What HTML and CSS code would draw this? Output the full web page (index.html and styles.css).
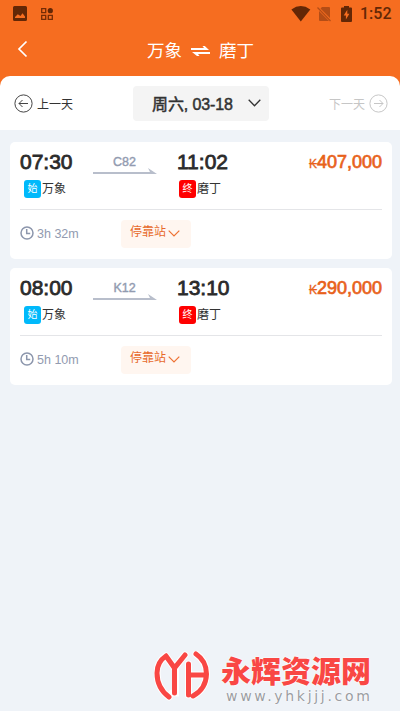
FILE: index.html
```html
<!DOCTYPE html>
<html lang="zh-CN">
<head>
<meta charset="utf-8">
<title>万象 ⇌ 磨丁</title>
<link rel="stylesheet" href="styles.css">
</head>
<body>
<header class="header">
  <div class="status">
    <svg class="s-photo" width="14" height="15" viewBox="0 0 14 15"><path fill="#632706" fill-rule="evenodd" d="M1.5 0h11Q14 0 14 1.5v12q0 1.500-1.500 1.500h-11Q0 15 0 13.500v-12Q0 0 1.500 0zM2 12h10V10.500L9.500 7.200 7.500 10 4.800 8.200 2 11z"/></svg>
    <svg class="s-apps" width="12" height="12" viewBox="0 0 12 12"><g fill="none" stroke="#742c06" stroke-width="1.300"><path d="M.7.700h4v4h-4zM.7 7.300h4v4h-4zM7.300 7.300h4v4h-4z"/></g><circle cx="9.300" cy="2.700" r="2.600" fill="#632706"/></svg>
    <svg class="s-wifi" width="20" height="16" viewBox="0 0 20 16"><path fill="#632706" d="M.4 3.500Q9.800-3.300 19.300 3.500L9.800 15.500z"/></svg>
    <svg class="s-sim" width="15" height="16" viewBox="0 0 15 16"><path fill="#b44d16" d="M5 1h7q1 0 1 1v10L3.500 2.500zM2 5l10 10H3q-1 0-1-1z"/><path d="M.5 1.500l13 13.500" stroke="#b44d16" stroke-width="1.200"/></svg>
    <svg class="s-battery" width="11" height="16" viewBox="0 0 11 16"><path fill="#632706" d="M3 0h5v1.500h2q1 0 1 1V15q0 1-1 1H1q-1 0-1-1V2.500q0-1 1-1h2z"/><path fill="#f66d20" d="M6.300 3.800L2.700 9.500h2.200v4l3.500-5.700H6.300z"/></svg>
    <span class="clock">1:52</span>
  </div>
  <div class="titlebar">
    <svg class="back" width="12" height="18" viewBox="0 0 12 18"><path d="M9.500 1.500L2 9l7.500 7.500" fill="none" stroke="#fff" stroke-width="1.700"/></svg>
    <span class="place">万象</span>
    <svg class="swap" width="19" height="10" viewBox="0 0 19 10"><path fill="#fff" d="M0 1.900h13L11.500 0h2.300L18 3.900H0zM19 8H7L8.500 10H6L1 6h18z"/></svg>
    <span class="place">磨丁</span>
  </div>
</header>
<nav class="days">
  <div class="prev">
    <svg width="19" height="19" viewBox="0 0 19 19" fill="none" stroke="#444" stroke-width="1"><circle cx="9.500" cy="9.500" r="8.600"/><path d="M14 9.500H5M8.500 6L5 9.500 8.500 13"/></svg>
    <span>上一天</span>
  </div>
  <div class="date"><span>周六, 03-18</span>
    <svg width="13" height="8" viewBox="0 0 13 8"><path d="M.7.800l5.800 5.900L12.300.8" fill="none" stroke="#333" stroke-width="1.300"/></svg>
  </div>
  <div class="next">
    <span>下一天</span>
    <svg width="19" height="19" viewBox="0 0 19 19" fill="none" stroke="#c6c6c6" stroke-width="1"><circle cx="9.500" cy="9.500" r="8.600"/><path d="M5 9.500h9M10.500 6L14 9.500 10.500 13"/></svg>
  </div>
</nav>
<main class="trips">
  <article class="card">
    <div class="route">
      <div class="stop"><div class="time">07:30</div><div class="station"><i class="tag start">始</i><span>万象</span></div></div>
      <div class="train"><span>C82</span>
        <svg width="64" height="7" viewBox="0 0 64 7"><path fill="#b8becb" d="M0 4h57L55 0l9 6H0z"/></svg></div>
      <div class="stop arrive"><div class="time">11:02</div><div class="station"><i class="tag end">终</i><span>磨丁</span></div></div>
      <div class="price"><small>₭</small>407,000</div>
    </div>
    <div class="details">
      <div class="duration"><svg width="14" height="14" viewBox="0 0 14 14" fill="none" stroke="#8c96ac" stroke-width="1.500"><circle cx="7" cy="7" r="6"/><path d="M6.700 3v4.500h3.500"/></svg><span>3h 32m</span></div>
      <div class="stops"><span>停靠站</span><svg width="12" height="7" viewBox="0 0 12 7"><path d="M.7.700L6 6 11.300.7" fill="none" stroke="#ee7132" stroke-width="1.200"/></svg></div>
    </div>
  </article>
  <article class="card">
    <div class="route">
      <div class="stop"><div class="time">08:00</div><div class="station"><i class="tag start">始</i><span>万象</span></div></div>
      <div class="train"><span>K12</span>
        <svg width="64" height="7" viewBox="0 0 64 7"><path fill="#b8becb" d="M0 4h57L55 0l9 6H0z"/></svg></div>
      <div class="stop arrive"><div class="time">13:10</div><div class="station"><i class="tag end">终</i><span>磨丁</span></div></div>
      <div class="price"><small>₭</small>290,000</div>
    </div>
    <div class="details">
      <div class="duration"><svg width="14" height="14" viewBox="0 0 14 14" fill="none" stroke="#8c96ac" stroke-width="1.500"><circle cx="7" cy="7" r="6"/><path d="M6.700 3v4.500h3.500"/></svg><span>5h 10m</span></div>
      <div class="stops"><span>停靠站</span><svg width="12" height="7" viewBox="0 0 12 7"><path d="M.7.700L6 6 11.300.7" fill="none" stroke="#ee7132" stroke-width="1.200"/></svg></div>
    </div>
  </article>
</main>
<div class="watermark">
  <svg width="56" height="50" viewBox="0 0 56 50" fill="none" stroke-linecap="round"><g stroke="#fff" stroke-width="7"><path d="M12 5Q3 11 3 22 3 37 15 46M12 5l8.500 12L31 4M21.500 17v25H18M42 3q10.500 7 10.500 20Q52 38 39 45M34.500 13v31M34.500 24H51"/></g><g stroke="#f94744" stroke-width="5"><path d="M12 5Q3 11 3 22 3 37 15 46M12 5l8.500 12L31 4M20.500 17v25M42 3q10.500 7 10.500 20Q52 38 39 45M34.500 13v31M34.500 24H51"/></g></svg>
  <div class="wm-text"><div class="wm-name">永辉资源网</div><div class="wm-url">www.yhkjjj.com</div></div>
</div>
</body>
</html>
```

FILE: styles.css
```css
* { box-sizing: border-box; }
body {
  margin: 0;
  width: 400px;
  height: 711px;
  overflow: hidden;
  position: relative;
  background: linear-gradient(#f66d20 0 90px, #eff3f8 90px);
  color: #333;
  font-family: "Liberation Sans", "Noto Sans CJK SC", sans-serif;
}
svg { display: block; flex: none; }
.header { height: 76px; background: #f66d20; }
.status { height: 27px; display: flex; align-items: center; padding-left: 13px; }
.s-apps { margin-left: 14px; }
.s-wifi { margin-left: 238px; }
.s-sim { margin-left: 6px; }
.s-battery { margin-left: 9px; }
.clock { margin-left: 8px; color: #632706; font: 500 16px/27px Roboto, sans-serif; white-space: nowrap; }
.titlebar { height: 49px; display: flex; align-items: center; padding-left: 17px; color: #fff; }
.back { margin: -5px 118px 0 0; }
.place { font-size: 17.500px; line-height: 49px; white-space: nowrap; }
.swap { margin: -2px 9px 0 9px; }
.days {
  height: 54px;
  padding: 0 12px 0 14px;
  display: flex;
  align-items: center;
  justify-content: space-between;
  background: #fff;
  border-radius: 10px 10px 0 0;
  font-size: 12px;
}
.prev, .next { display: flex; align-items: center; gap: 4px; width: 119px; padding-top: 1px; }
.next { justify-content: flex-end; color: #c6c6c6; }
.date {
  width: 136px;
  height: 35px;
  padding: 0 8px 0 19px;
  display: flex;
  align-items: center;
  justify-content: space-between;
  background: #f4f4f4;
  border-radius: 4px;
  font-size: 16px;
  letter-spacing: -.1px;
  white-space: nowrap;
  -webkit-text-stroke: .5px #333;
}
.trips { background: #eff3f8; height: 581px; padding: 12px 8px 0 10px; display: flex; flex-direction: column; gap: 9px; }
.card { height: 117px; padding: 0 10px; background: #fff; border-radius: 5px; }
.route { height: 68px; display: flex; border-bottom: 1px solid #e4e5e8; }
.stop { width: 72px; flex: none; }
.time { height: 37px; padding: 1px 0 0; font-size: 21px; line-height: 38px; -webkit-text-stroke: .8px #2b2b2b; color: #2b2b2b; }
.station { display: flex; align-items: center; height: 20px; padding-left: 4px; font-size: 12px; white-space: nowrap; }
.station span { margin-top: -3px; }
.arrive .station { padding-left: 2px; }
.tag { width: 17px; height: 18px; margin-right: 1px; border-radius: 3px; color: #fff; font-size: 10px; line-height: 17px; font-style: normal; text-align: center; }
.start { background: #00b9fb; }
.end { background: #f00; }
.train { width: 85px; flex: none; padding-top: 13px; color: #929bb0; font-size: 12.500px; line-height: 15px; -webkit-text-stroke: .4px #929bb0; }
.train span { display: block; width: 65px; text-align: center; }
.train svg { margin-top: -2px; margin-left: 1px; }
.price { margin-left: auto; color: #e8611a; font-size: 18px; line-height: 41px; -webkit-text-stroke: .7px #e8611a; }
.price small { font-size: 12px; -webkit-text-stroke: .3px #e8611a; }
.details { display: flex; padding-top: 10px; }
.duration { width: 101px; height: 28px; display: flex; align-items: center; gap: 3px; color: #929bb0; font-size: 12.500px; }
.duration svg { margin-top: -3px; }
.stops { width: 70px; height: 28px; display: flex; align-items: center; padding-left: 9px; gap: 2px; background: #fff6f0; border-radius: 4px; color: #e76a2b; font-size: 12px; }
.stops span { line-height: 18px; margin-top: -5px; white-space: nowrap; }
.stops svg { margin-top: -2px; }
.watermark { position: absolute; left: 154px; top: 651px; display: flex; }
.wm-text { margin-left: 11px; }
.wm-name { font: 900 30px/36px "Noto Sans CJK SC", sans-serif; color: #f94744; white-space: nowrap; text-shadow: 0 0 2px #fff, 0 0 2px #fff; }
.wm-url { margin: 1px 0 0 5px; font: 14px/17px "DejaVu Sans", sans-serif; letter-spacing: 2.700px; color: #9a9da2; text-shadow: 0 0 2px #fff, 0 0 1px #fff; }
```
